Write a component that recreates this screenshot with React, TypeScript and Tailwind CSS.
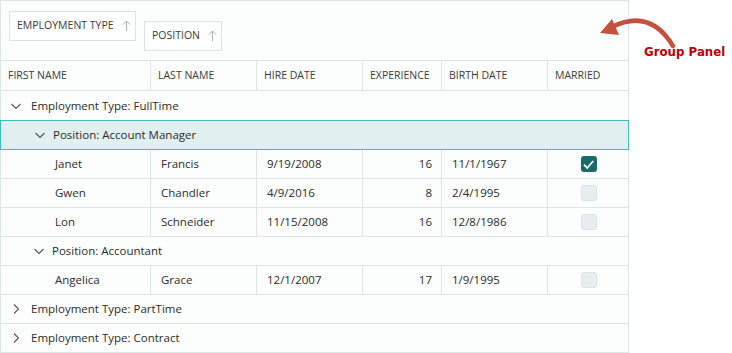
import React from "react";

type Person = {
  first: string;
  last: string;
  hire: string;
  exp: number;
  birth: string;
  married: boolean;
};

const cols = "grid grid-cols-[150px_106px_106px_79px_106px_81px]";

function Chevron({ open }: { open: boolean }) {
  return (
    <svg width="10" height="10" viewBox="0 0 10 10" className="shrink-0">
      {open ? (
        <path d="M0.5 3 L5 7.5 L9.5 3" fill="none" stroke="#555" strokeWidth="1.1" />
      ) : (
        <path d="M3 0.5 L7.5 5 L3 9.5" fill="none" stroke="#555" strokeWidth="1.1" />
      )}
    </svg>
  );
}

function SortArrow() {
  return (
    <svg width="9" height="12" viewBox="0 0 9 12" className="shrink-0">
      <path d="M4.5 1 V11 M1 4.5 L4.5 1 L8 4.5" fill="none" stroke="#a8adad" strokeWidth="1" />
    </svg>
  );
}

function Chip({ label, className }: { label: string; className: string }) {
  return (
    <div
      className={`flex items-center gap-[8px] h-[30px] pl-[7px] border border-[#dbe3e3] bg-[#fdfefe] text-[10.5px] text-[#3a3a3a] whitespace-nowrap ${className}`}
    >
      <span>{label}</span>
      <SortArrow />
    </div>
  );
}

function GroupRow({
  label,
  open,
  indent,
  tall,
}: {
  label: string;
  open: boolean;
  indent: boolean;
  tall?: boolean;
}) {
  return (
    <div
      className={`flex items-center ${tall ? "h-[30px]" : "h-[29px]"} border-b border-[#dde5e5] text-[11.5px] text-[#2b2b2b] ${
        indent ? "pl-[33px] gap-[8px]" : "pl-[10px] gap-[10px]"
      }`}
    >
      <Chevron open={open} />
      <span>{label}</span>
    </div>
  );
}

function Checkbox({ checked }: { checked: boolean }) {
  if (checked) {
    return (
      <div className="w-[16px] h-[16px] rounded-[3px] bg-[#1a6a6a] flex items-center justify-center">
        <svg width="13" height="13" viewBox="0 0 12 12">
          <path d="M1.8 6.2 L4.8 9.2 L10.4 2.8" fill="none" stroke="#fff" strokeWidth="1.6" />
        </svg>
      </div>
    );
  }
  return <div className="w-[16px] h-[16px] rounded-[3px] bg-[#e9eded] border border-[#dbe2e2]" />;
}

function DataRow({ p }: { p: Person }) {
  return (
    <div className={`${cols} h-[29px] border-b border-[#dde5e5] text-[11.5px] text-[#2b2b2b]`}>
      <div className="flex items-center pl-[54px] border-r border-[#dde5e5]">{p.first}</div>
      <div className="flex items-center pl-[10px] border-r border-[#dde5e5]">{p.last}</div>
      <div className="flex items-center pl-[10px] border-r border-[#dde5e5]">{p.hire}</div>
      <div className="flex items-center justify-end pr-[9px] border-r border-[#dde5e5]">{p.exp}</div>
      <div className="flex items-center pl-[10px] border-r border-[#dde5e5]">{p.birth}</div>
      <div className="flex items-center justify-center">
        <Checkbox checked={p.married} />
      </div>
    </div>
  );
}

const managers: Person[] = [
  { first: "Janet", last: "Francis", hire: "9/19/2008", exp: 16, birth: "11/1/1967", married: true },
  { first: "Gwen", last: "Chandler", hire: "4/9/2016", exp: 8, birth: "2/4/1995", married: false },
  { first: "Lon", last: "Schneider", hire: "11/15/2008", exp: 16, birth: "12/8/1986", married: false },
];

const accountants: Person[] = [
  { first: "Angelica", last: "Grace", hire: "12/1/2007", exp: 17, birth: "1/9/1995", married: false },
];

const headers = ["First Name", "Last Name", "Hire Date", "Experience", "Birth Date", "Married"];

export default function App() {
  return (
    <div
      className="relative w-[732px] h-[353px] bg-white overflow-hidden"
      style={{ fontFamily: "'Open Sans', 'Noto Sans', sans-serif" }}
    >
      <div className="w-[629px] h-[353px] border border-[#dde5e5] bg-[#fcfefe]">
        {/* group panel */}
        <div className="flex items-start gap-[8px] h-[60px] pl-[8px] pt-[10px] border-b border-[#dde5e5]">
          <Chip label="EMPLOYMENT TYPE" className="w-[127px]" />
          <Chip label="POSITION" className="w-[78px] mt-[10px]" />
        </div>

        {/* column headers */}
        <div className={`${cols} h-[30px] border-b border-[#dde5e5] text-[10.5px] text-[#3a3a3a] uppercase`}>
          {headers.map((h, i) => (
            <div
              key={h}
              className={`flex items-center pl-[7px] ${i < headers.length - 1 ? "border-r border-[#dde5e5]" : ""}`}
            >
              {h}
            </div>
          ))}
        </div>

        <GroupRow label="Employment Type: FullTime" open indent={false} tall />
        <div className="relative -mx-px -mt-px h-[30px] border border-[#3bbdb8] bg-[#e0eff0]">
          <div className="flex items-center gap-[8px] h-full pl-[34px] text-[11.5px] text-[#2b2b2b]">
            <Chevron open />
            <span>Position: Account Manager</span>
          </div>
        </div>
        {managers.map((p) => (
          <DataRow key={p.first} p={p} />
        ))}
        <GroupRow label="Position: Accountant" open indent />
        {accountants.map((p) => (
          <DataRow key={p.first} p={p} />
        ))}
        <GroupRow label="Employment Type: PartTime" open={false} indent={false} />
        <div className="flex items-center h-[28px] pl-[10px] gap-[10px] text-[11.5px] text-[#2b2b2b]">
          <Chevron open={false} />
          <span>Employment Type: Contract</span>
        </div>
      </div>

      {/* annotation callout */}
      <svg className="absolute left-0 top-0 pointer-events-none" width="732" height="353">
        <path d="M612 27 Q650 8 673 46" fill="none" stroke="#c4513b" strokeWidth="4.5" strokeLinecap="round" />
        <path d="M600 33 L612 19 L619 35 Z" fill="#c4513b" />
      </svg>
      <div
        className="absolute left-[644px] top-[47px] text-[11.8px] leading-none font-bold whitespace-nowrap text-[#c00000]"
        style={{ fontFamily: "'DejaVu Sans', Verdana, sans-serif" }}
      >
        Group Panel
      </div>
    </div>
  );
}
